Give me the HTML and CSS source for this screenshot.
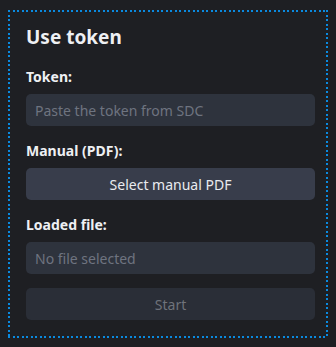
FILE: index.html
```html
<html>
<head>
    <title>Use token</title>
    <link rel="stylesheet" href="styles.css">
</head>
<body>
    <div class="panel">
        <h1 class="title">Use token</h1>

        <div class="field">
            <label for="token">Token:</label>
            <input id="token" type="text" class="datafield" placeholder="Paste the token from SDC"/>
        </div>

        <div class="field">
            <label>Manual (PDF):</label>
            <button id="pick" class="btn">Select manual PDF</button>
        </div>

        <div class="field last">
            <label for="loaded">Loaded file:</label>
            <input id="loaded" type="text" class="datafield" placeholder="No file selected" readonly/>
        </div>

        <button id="start" class="btn start" disabled>Start</button>
    </div>
</body>
</html>
```

FILE: styles.css
```css
body {
    margin: 0;
    background-color: #1e1f23;
    font-family: "Noto Sans", "Open Sans", sans-serif;
    color: #eef0f3;
}
.panel {
    position: relative;
    margin: 10px 8px 9px 8px;
    border: 2px solid transparent;
    padding: 13px 11px 16px 16px;
    display: flex;
    flex-direction: column;
}
/* dotted focus ring */
.panel::before {
    content: "";
    position: absolute;
    top: -2px;
    left: -2px;
    right: -2px;
    bottom: -2px;
    pointer-events: none;
    background:
        linear-gradient(to right, #0a8ae0 0 2px, transparent 2px 5px, #0a8ae0 5px 7px, transparent 7px) top left / 9px 2px repeat-x,
        linear-gradient(to right, #0a8ae0 0 2px, transparent 2px 5px, #0a8ae0 5px 7px, transparent 7px) bottom left / 9px 2px repeat-x,
        linear-gradient(to bottom, #0a8ae0 0 2px, transparent 2px 5px, #0a8ae0 5px 7px, transparent 7px) top left / 2px 9px repeat-y,
        linear-gradient(to bottom, #0a8ae0 0 2px, transparent 2px 5px, #0a8ae0 5px 7px, transparent 7px) top right / 2px 9px repeat-y;
}
.title {
    margin: 0 0 19px 0;
    font-size: 19px;
    line-height: 24px;
    font-weight: bold;
}
.field {
    display: flex;
    flex-direction: column;
    margin-bottom: 16px;
}
.field.last {
    margin-bottom: 14px;
}
.field label {
    font-size: 14px;
    line-height: 18px;
    font-weight: bold;
    margin-bottom: 8px;
}
.datafield {
    height: 32px;
    box-sizing: border-box;
    border: none;
    border-radius: 5px;
    background-color: #2e333d;
    color: #c8ccd4;
    font-family: inherit;
    font-size: 14px;
    padding: 0 9px;
    outline: none;
}
.datafield::placeholder {
    color: #6e7480;
}
.btn {
    height: 32px;
    border: none;
    border-radius: 5px;
    background-color: #383d4b;
    color: #e9ebef;
    font-family: inherit;
    font-size: 14px;
}
.start {
    background-color: #2a2e37;
    color: #6f737b;
}
```
